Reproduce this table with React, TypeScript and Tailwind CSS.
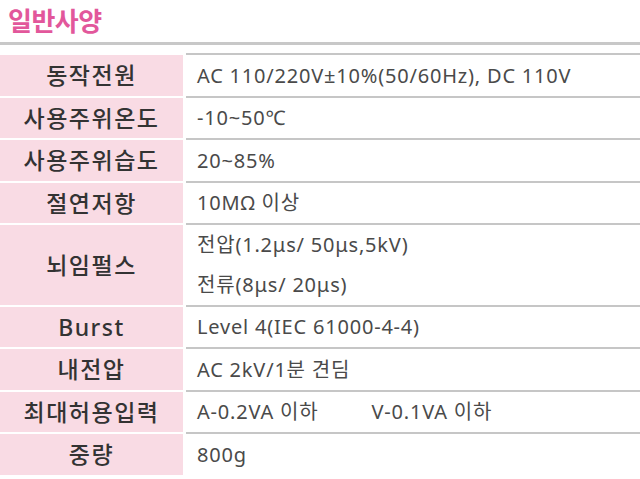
import React from "react";

const font = { fontFamily: '"Noto Sans", "Noto Sans CJK KR", sans-serif' };

type Row = { label: string; h: string; values: React.ReactNode[] };

const rows: Row[] = [
  { label: "동작전원", h: "h-[43px]", values: ["AC 110/220V±10%(50/60Hz), DC 110V"] },
  { label: "사용주위온도", h: "h-[42px]", values: ["-10~50℃"] },
  { label: "사용주위습도", h: "h-[43px]", values: ["20~85%"] },
  { label: "절연저항", h: "h-[42px]", values: ["10MΩ 이상"] },
  { label: "뇌임펄스", h: "h-[82px]", values: ["전압(1.2μs/ 50μs,5kV)", "전류(8μs/ 20μs)"] },
  { label: "Burst", h: "h-[42px]", values: ["Level 4(IEC 61000-4-4)"] },
  { label: "내전압", h: "h-[43px]", values: ["AC 2kV/1분 견딤"] },
  {
    label: "최대허용입력",
    h: "h-[42px]",
    values: [
      <span key="a" className="flex">
        <span>A-0.2VA 이하</span>
        <span className="ml-[53px]">V-0.1VA 이하</span>
      </span>,
    ],
  },
  { label: "중량", h: "h-[43px]", values: ["800g"] },
];

export default function App() {
  return (
    <div className="w-[640px] h-[479px] overflow-hidden bg-white" style={font}>
      <div className="h-[42px] flex items-center pl-[8px]">
        <span className="text-[26px] font-bold text-[#e2579b] tracking-[-0.5px] leading-none">일반사양</span>
      </div>
      <div className="h-[3px] bg-[#c8c8c8]" />
      <div className="h-[8px]" />
      <div className="flex flex-col">
        {rows.map((r) => (
          <div key={r.label} className={`flex ${r.h}`}>
            <div className="w-[183px] shrink-0 border-t-2 border-white bg-[#f9dbe4] flex items-center justify-center text-[23px] font-medium text-[#333] tracking-[1.5px]">
              {r.label}
            </div>
            <div className="ml-[3px] flex-1 border-t-2 border-[#c6c6c6] flex flex-col justify-center pl-[11px] text-[20px] text-[#4a4a4a] tracking-[0.8px]">
              {r.values.map((v, i) => (
                <div key={i} className={r.values.length > 1 ? "h-[40px] flex items-center" : ""}>
                  {v}
                </div>
              ))}
            </div>
          </div>
        ))}
      </div>
    </div>
  );
}
